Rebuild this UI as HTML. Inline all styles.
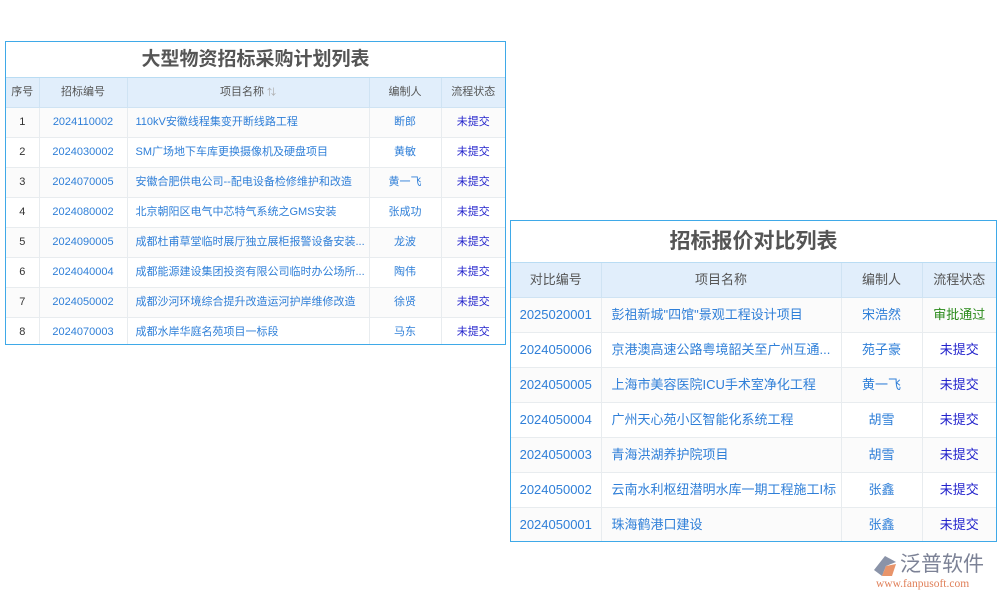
<!DOCTYPE html>
<html><head><meta charset="utf-8"><style>
body{margin:0;width:1000px;height:600px;background:#fff;font-family:"Liberation Sans","Noto Sans CJK SC",sans-serif;position:relative;overflow:hidden}
.box{position:absolute;border:1px solid #3fa9e8;background:#fff;box-sizing:border-box;overflow:hidden}
.title{text-align:center;font-weight:bold;color:#555;border-bottom:1px solid #b9dcf3}
table{border-collapse:collapse;width:100%;table-layout:fixed}
th,td{padding:0}
th{background:#e1eefb;color:#555;font-weight:normal;border-right:1px solid #cfe3f3;border-bottom:1px solid #cfe3f3}
td{border-right:1px solid #e8ecef;border-bottom:1px solid #e8ecef;text-align:center;color:#2f7fd8;white-space:nowrap;overflow:hidden;text-overflow:ellipsis}
td.l{text-align:left;padding-left:8px}
td.n{color:#333}
td.s{color:#2222cc}
td.g{color:#2a8a1a}
tr:nth-child(even) td{background:#fbfbfb}
th:last-child,td:last-child{border-right:none}
#t1{left:5px;top:41px;width:501px;height:304px}
#t1 .title{height:35px;line-height:35px;font-size:19px}
#t1 th{height:29px;line-height:29px;font-size:11px}
#t1 td{height:29px;line-height:29px;font-size:11px}
#t2{left:510px;top:220px;width:487px;height:322px}
#t2 .title{height:41px;line-height:41px;font-size:21px}
#t2 th{height:34px;line-height:34px;font-size:13px}
#t2 td{height:34px;line-height:34px;font-size:13px}
#t2 td.l{padding-left:10px}
</style></head><body>
<div class="box" id="t1"><div class="title">大型物资招标采购计划列表</div>
<table><colgroup><col style="width:33px"><col style="width:88px"><col style="width:242px"><col style="width:72px"><col></colgroup>
<tr><th>序号</th><th>招标编号</th><th>项目名称 <span style="color:#aaa;font-size:9px">⇅</span></th><th>编制人</th><th>流程状态</th></tr>
<tr><td class="n">1</td><td>2024110002</td><td class="l">110kV安徽线程集变开断线路工程</td><td>断郎</td><td class="s">未提交</td></tr>
<tr><td class="n">2</td><td>2024030002</td><td class="l">SM广场地下车库更换摄像机及硬盘项目</td><td>黄敏</td><td class="s">未提交</td></tr>
<tr><td class="n">3</td><td>2024070005</td><td class="l">安徽合肥供电公司--配电设备检修维护和改造</td><td>黄一飞</td><td class="s">未提交</td></tr>
<tr><td class="n">4</td><td>2024080002</td><td class="l">北京朝阳区电气中芯特气系统之GMS安装</td><td>张成功</td><td class="s">未提交</td></tr>
<tr><td class="n">5</td><td>2024090005</td><td class="l">成都杜甫草堂临时展厅独立展柜报警设备安装...</td><td>龙波</td><td class="s">未提交</td></tr>
<tr><td class="n">6</td><td>2024040004</td><td class="l">成都能源建设集团投资有限公司临时办公场所...</td><td>陶伟</td><td class="s">未提交</td></tr>
<tr><td class="n">7</td><td>2024050002</td><td class="l">成都沙河环境综合提升改造运河护岸维修改造</td><td>徐贤</td><td class="s">未提交</td></tr>
<tr><td class="n">8</td><td>2024070003</td><td class="l">成都水岸华庭名苑项目一标段</td><td>马东</td><td class="s">未提交</td></tr>
</table></div>
<div class="box" id="t2"><div class="title">招标报价对比列表</div>
<table><colgroup><col style="width:90px"><col style="width:240px"><col style="width:81px"><col></colgroup>
<tr><th>对比编号</th><th>项目名称</th><th>编制人</th><th>流程状态</th></tr>
<tr><td>2025020001</td><td class="l">彭祖新城"四馆"景观工程设计项目</td><td>宋浩然</td><td class="g">审批通过</td></tr>
<tr><td>2024050006</td><td class="l">京港澳高速公路粤境韶关至广州互通...</td><td>苑子豪</td><td class="s">未提交</td></tr>
<tr><td>2024050005</td><td class="l">上海市美容医院ICU手术室净化工程</td><td>黄一飞</td><td class="s">未提交</td></tr>
<tr><td>2024050004</td><td class="l">广州天心苑小区智能化系统工程</td><td>胡雪</td><td class="s">未提交</td></tr>
<tr><td>2024050003</td><td class="l">青海洪湖养护院项目</td><td>胡雪</td><td class="s">未提交</td></tr>
<tr><td>2024050002</td><td class="l">云南水利枢纽潜明水库一期工程施工I标</td><td>张鑫</td><td class="s">未提交</td></tr>
<tr><td>2024050001</td><td class="l">珠海鹤港口建设</td><td>张鑫</td><td class="s">未提交</td></tr>
</table></div>
<div style="position:absolute;left:872px;top:552px;width:125px;height:40px">
<svg width="26" height="26" viewBox="0 0 26 26" style="position:absolute;left:0;top:2px"><path d="M13 2 L24 8 L14 12 L10 22 L2 16 Z" fill="#8a93a8"/><path d="M14 12 L24 10 L20 22 L10 22 Z" fill="#e8946a"/></svg>
<div style="position:absolute;left:28px;top:0;font-size:21px;color:#7c8296;line-height:26px;white-space:nowrap">泛普软件</div>
<div style="position:absolute;left:4px;top:26px;font-family:'Liberation Serif',serif;font-size:11.5px;color:#e0805a;white-space:nowrap">www.fanpusoft.com</div>
</div>
</body></html>
